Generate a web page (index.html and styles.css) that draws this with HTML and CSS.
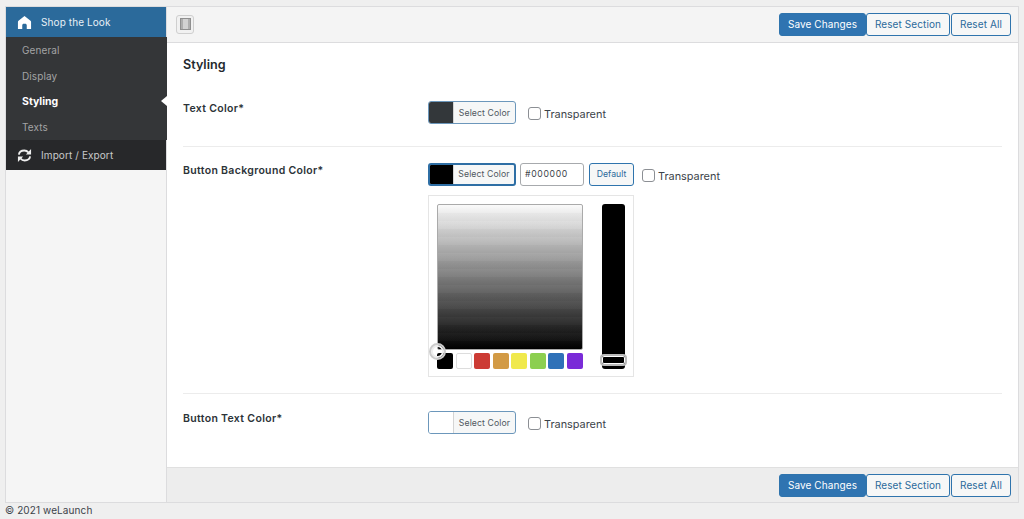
FILE: index.html
```html
<!DOCTYPE html>
<html lang="en">
<head>
<meta charset="utf-8">
<title>Shop the Look - Styling</title>
<link rel="stylesheet" href="styles.css">
</head>
<body>
<div class="panel">
  <aside class="side">
    <div class="side-head">
      <svg class="ico" viewBox="0 0 16 16" width="15" height="15"><path fill="#fff" d="M8 1 1.6 6.200c-.4.3-.6.7-.6 1.200V15h4.600v-4.200c0-.9.7-1.600 1.600-1.600h1.600c.9 0 1.600.7 1.600 1.600V15H15V7.400c0-.5-.2-.9-.6-1.200z"/></svg>
      <span>Shop the Look</span>
    </div>
    <ul class="side-list">
      <li>General</li>
      <li>Display</li>
      <li class="on">Styling</li>
      <li>Texts</li>
    </ul>
    <div class="side-foot">
      <svg class="ico" viewBox="0 0 16 16" width="15" height="15"><path fill="none" stroke="#eee" stroke-width="2" d="M2 7c.4-2.600 2.900-4.300 5.800-4.300 1.900 0 3.300.7 4.400 2.100M14 9c-.4 2.600-2.900 4.300-5.800 4.300-1.900 0-3.300-.7-4.400-2.100"/><path fill="#eee" d="M15 1v6H9.500zM1 15V9h5.500z"/></svg>
      <span>Import / Export</span>
    </div>
  </aside>
  <main class="main">
    <header class="bar bar-top">
      <span class="expand"><span class="expand-in"><span class="expand-col"></span></span></span>
      <div class="btns">
        <button class="btn primary">Save Changes</button><button class="btn">Reset Section</button><button class="btn">Reset All</button>
      </div>
    </header>
    <section class="content">
      <h2>Styling</h2>
      <div class="row row1">
        <div class="lab">Text Color*</div>
        <div class="fld">
          <div class="line">
            <span class="pick"><i class="sw dark"></i><b>Select Color</b></span>
            <label class="tr"><i class="cb"></i>Transparent</label>
          </div>
        </div>
      </div>
      <div class="row row2">
        <div class="lab">Button Background Color*</div>
        <div class="fld">
          <div class="line">
            <span class="pick act"><i class="sw black"></i><b>Select Color</b></span>
            <span class="hex">#000000</span>
            <span class="def">Default</span>
            <label class="tr"><i class="cb"></i>Transparent</label>
          </div>
          <div class="iris">
            <div class="iris-left">
              <div class="square"></div>
              <div class="swatches">
                <i class="c1"></i><i class="c2"></i><i class="c3"></i><i class="c4"></i><i class="c5"></i><i class="c6"></i><i class="c7"></i><i class="c8"></i>
              </div>
              <span class="dot"></span>
            </div>
            <div class="strip"><span class="grip"></span></div>
          </div>
        </div>
      </div>
      <div class="row row3">
        <div class="lab">Button Text Color*</div>
        <div class="fld">
          <div class="line">
            <span class="pick"><i class="sw white"></i><b>Select Color</b></span>
            <label class="tr"><i class="cb"></i>Transparent</label>
          </div>
        </div>
      </div>
    </section>
    <footer class="bar bar-bot">
      <div class="btns">
        <button class="btn primary">Save Changes</button><button class="btn">Reset Section</button><button class="btn">Reset All</button>
      </div>
    </footer>
  </main>
</div>
<p class="copy">© 2021 weLaunch</p>
</body>
</html>
```
FILE: styles.css
```css
* { box-sizing: border-box; }
html, body { margin: 0; height: 519px; overflow: hidden; }
body {
  background: #efefef;
  color: #2c3338;
  font-family: Inter, "Noto Sans", sans-serif;
  font-size: 11px;
  padding: 6px 5px 0 5px;
}
.panel {
  display: flex;
  height: 497px;
  border: 1px solid #dcdcde;
  background: #f5f5f5;
}
.side {
  width: 161px;
  flex: none;
  border-right: 1px solid #dcdcde;
  background: #f5f5f5;
  color: #fff;
}
.ico { flex: none; }
.side-head, .side-foot {
  display: flex;
  align-items: center;
  gap: 9px;
  padding-left: 11px;
  height: 30px;
  font-size: 10px;
  letter-spacing: .1px;
}
.side-head { background: #2b6a9b; color: #e8f0f6; }
.side-foot { background: #27282a; color: #c9cacb; }
.side-list {
  list-style: none;
  margin: 0;
  padding: 1px 0 0;
  background: #343638;
  height: 103px;
  margin-right: -1px;
  position: relative;
}
.side-list li {
  height: 25.6px;
  line-height: 25.6px;
  padding-left: 16px;
  font-size: 10px;
  letter-spacing: .1px;
  color: #a3a4a5;
  position: relative;
}
.side-list li.on { color: #fff; font-weight: 700; font-size: 10.5px; letter-spacing: 0; }
.side-list li.on::after {
  content: "";
  position: absolute;
  right: 0;
  top: 7px;
  border: 5px solid transparent;
  border-right: 6px solid #fff;
  border-left: 0;
}
.main {
  flex: 1;
  display: flex;
  flex-direction: column;
  min-width: 0;
}
.bar {
  display: flex;
  align-items: center;
  justify-content: space-between;
  background: #f4f4f4;
  padding: 0 7px 0 9px;
  flex: none;
}
.bar-top { height: 36px; padding-bottom: 1px; border-bottom: 1px solid #dcdcde; }
.bar-bot {
  height: 35px;
  justify-content: flex-end;
  background: #ededed;
  border-top: 1px solid #e0e0e0;
}
.expand {
  width: 18px;
  height: 19px;
  border: 1px solid #cfcfcf;
  border-radius: 3px;
  background: #f1f1f1;
  display: flex;
  align-items: center;
  justify-content: center;
}
.expand-in {
  width: 11px;
  height: 12px;
  background: #aeaeae;
  border: 1px solid #8f8f8f;
  display: flex;
  justify-content: center;
}
.expand-col { width: 5px; background: #d2d2d2; }
.btns { display: flex; }
.btn {
  height: 23px;
  padding: 0;
  margin: 0;
  font: 10px Inter, "Noto Sans", sans-serif;
  letter-spacing: .1px;
  color: #2b6a9b;
  background: #f6f7f7;
  border: 1px solid #2f74ad;
  border-radius: 3px;
  width: 84px;
}
.btn:last-child { width: 60px; margin-left: 1px; }
.btn.primary { width: 87px; background: #2f74b1; color: #fff; }
.content {
  flex: 1;
  background: #fff;
  padding: 0 16px;
  min-height: 0;
}
h2 {
  margin: 0;
  padding-top: 14px;
  height: 42px;
  font-size: 12.6px;
  font-weight: 600;
  line-height: 16px;
  color: #23282d;
}
.row { display: flex; border-bottom: 1px solid #ececec; }
.row1 { height: 62px; padding-top: 16px; }
.row2 { height: 247px; padding-top: 16px; }
.row3 { padding-top: 17px; border-bottom: 0; }
.lab {
  width: 245px;
  flex: none;
  font-weight: 600;
  font-size: 10.5px;
  letter-spacing: .33px;
  line-height: 16px;
  color: #2c3338;
}
.line { display: flex; align-items: center; height: 23px; }
.pick {
  display: flex;
  width: 88px;
  height: 23px;
  border: 1px solid #6c97bb;
  border-radius: 3px;
  overflow: hidden;
  background: #f6f7f7;
}
.pick.act { border: 2px solid #2f6fa5; }
.sw { display: block; width: 25px; flex: none; border-right: 1px solid #d4d4d4; }
.act .sw { width: 24px; }
.sw.dark { background: #33373a; }
.sw.black { background: #000; }
.sw.white { background: #fff; }
.pick b {
  flex: 1;
  font-weight: 400;
  font-size: 8.7px;
  line-height: 22px;
  letter-spacing: .1px;
  text-align: center;
  color: #50575e;
  white-space: nowrap;
}
.act b { line-height: 19px; }
.tr {
  display: flex;
  align-items: center;
  font-size: 10.9px;
  color: #3c434a;
  margin-left: 12px;
  padding-top: 2px;
}
.cb {
  width: 13px;
  height: 13px;
  border: 1px solid #8c8f94;
  border-radius: 3px;
  background: #fff;
  margin-right: 3px;
}
.hex {
  width: 64px;
  height: 23px;
  margin-left: 4px;
  padding-left: 4px;
  border: 1px solid #a7aaad;
  border-radius: 3px;
  font-size: 8.7px;
  line-height: 21px;
  letter-spacing: .65px;
  color: #3c434a;
}
.def {
  width: 45px;
  height: 23px;
  margin-left: 5px;
  border: 1px solid #2f74ad;
  border-radius: 3px;
  background: #f6f7f7;
  font-size: 8.7px;
  line-height: 21px;
  text-align: center;
  color: #2b6a9b;
}
.def + .tr { margin-left: 8px; }
.iris {
  display: flex;
  width: 206px;
  height: 182px;
  margin-top: 9px;
  padding: 8px;
  gap: 19px;
  border: 1px solid #e5e5e5;
}
.iris-left { width: 146px; position: relative; }
.square {
  height: 146px;
  border: 1px solid #aaa;
  border-radius: 2px;
  background:
    repeating-linear-gradient(rgba(255, 255, 255, .02) 0 8px, rgba(0, 0, 0, .02) 8px 16px),
    linear-gradient(#fafafa, #000);
}
.swatches { display: flex; justify-content: space-between; margin-top: 3px; }
.swatches i { width: 16px; height: 16px; border-radius: 2px; display: block; }
.c1 { background: #000; }
.c2 { background: #fff; border: 1px solid #ddd; }
.c3 { background: #cc3b34; }
.c4 { background: #d29a45; }
.c5 { background: #f0e94c; }
.c6 { background: #8ccf50; }
.c7 { background: #2f71b8; }
.c8 { background: #7a2bd8; }
.dot {
  position: absolute;
  left: -8px;
  top: 139px;
  width: 17px;
  height: 17px;
  border: 2px solid #ccc;
  border-radius: 50%;
  box-shadow: inset 0 0 0 2px #eee;
}
.strip {
  width: 23px;
  height: 165px;
  background: #000;
  border-radius: 3px;
  position: relative;
}
.grip {
  position: absolute;
  left: -2px;
  top: 150px;
  width: 27px;
  height: 12px;
  border: 2px solid #bbb;
  border-radius: 4px;
  box-shadow: inset 0 0 0 1px #fff;
}
.copy {
  margin: 0;
  font-size: 10px;
  line-height: 14px;
  letter-spacing: .1px;
  color: #3c434a;
}
```
